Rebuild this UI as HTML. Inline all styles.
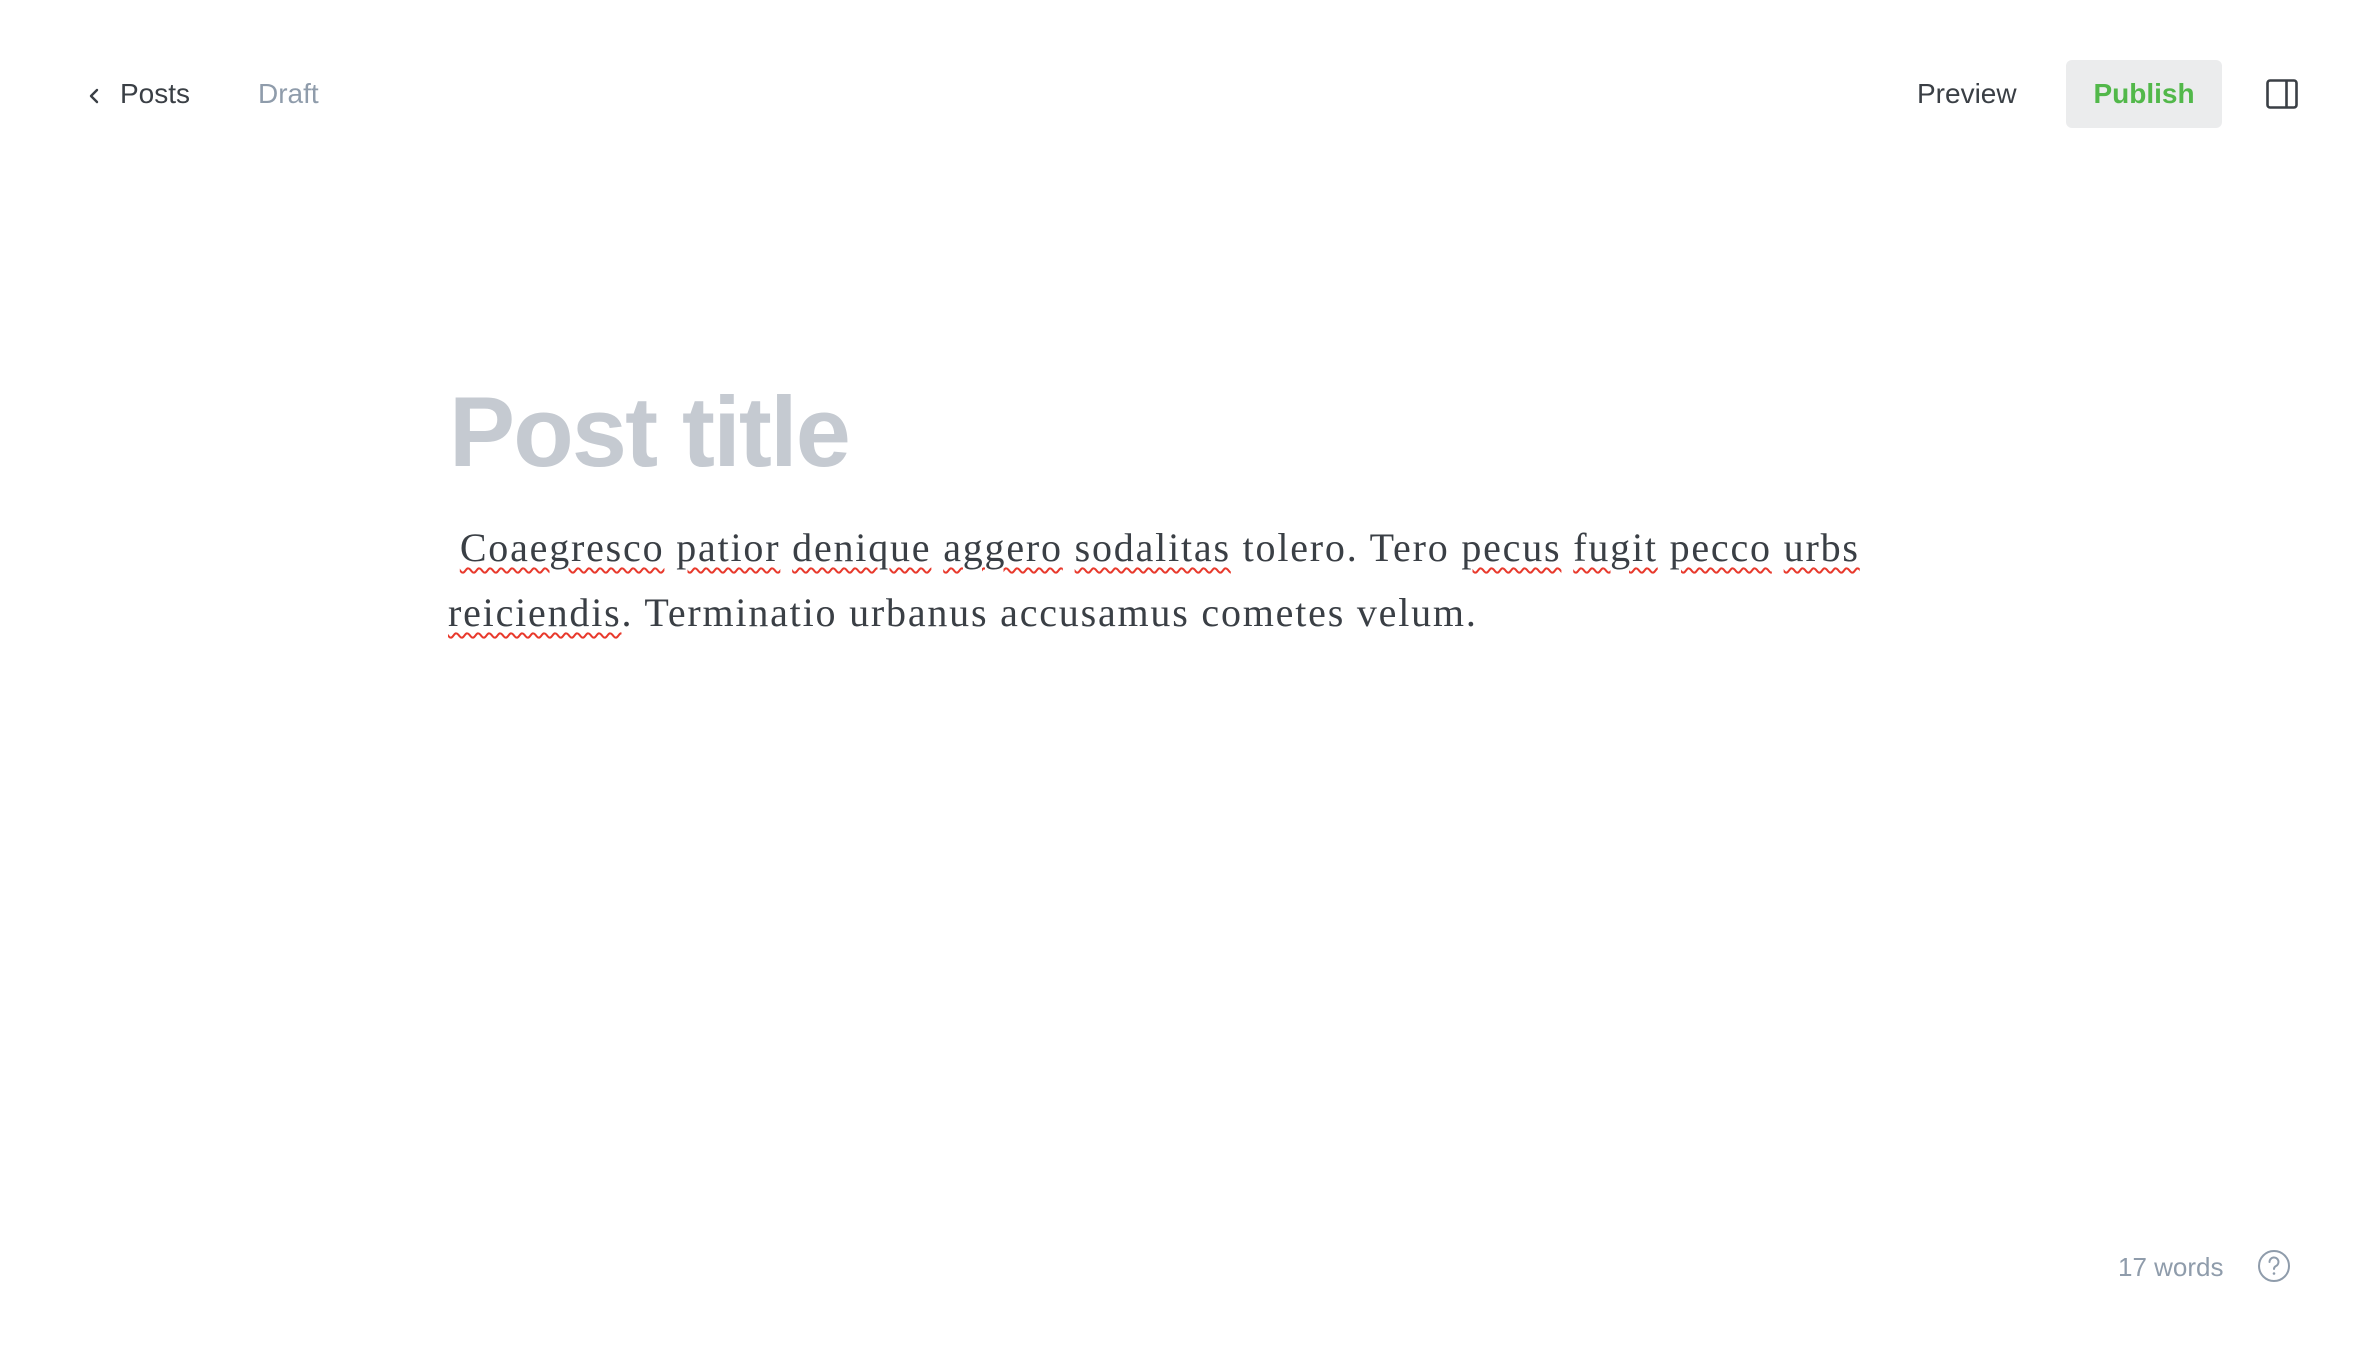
<!DOCTYPE html>
<html><head><meta charset="utf-8"><style>
html,body{margin:0;padding:0;background:#fff;width:2374px;height:1360px;overflow:hidden;position:relative;font-family:"Liberation Sans",sans-serif}
.abs{position:absolute;white-space:nowrap}
.nav{font-size:28px;line-height:28px}
.title{left:449px;top:382px;font-size:99px;line-height:99px;font-weight:bold;color:#c5cad1;letter-spacing:-1.8px}
.body{left:448px;top:515px;font-family:"Liberation Serif",serif;font-size:40px;line-height:65px;color:#3a3f45;letter-spacing:1.8px}
.sp{text-decoration:underline wavy #e8392c;text-decoration-thickness:2px;text-underline-offset:6px}
</style></head><body>
<svg class="abs" style="left:88px;top:88px" width="14" height="16" viewBox="0 0 14 16"><path d="M9 2 L3 8 L9 14" fill="none" stroke="#3a3f45" stroke-width="2.4" stroke-linecap="round" stroke-linejoin="round"/></svg>
<div class="abs nav" style="left:120px;top:80px;color:#3a3f45">Posts</div>
<div class="abs nav" style="left:258px;top:80px;color:#8f9cab">Draft</div>
<div class="abs nav" style="left:1917px;top:80px;color:#3a3f45">Preview</div>
<div class="abs" style="left:2066px;top:60px;width:156px;height:68px;background:#ebeced;border-radius:6px"></div>
<div class="abs nav" style="left:2066px;top:80px;width:156px;text-align:center;color:#52b84a;font-weight:bold">Publish</div>
<svg class="abs" style="left:2266px;top:79px" width="32" height="30" viewBox="0 0 32 30"><rect x="1.5" y="1.5" width="29" height="27" rx="2.5" fill="none" stroke="#3a3f45" stroke-width="2.6"/><line x1="20.5" y1="2" x2="20.5" y2="28" stroke="#3a3f45" stroke-width="2.6"/></svg>
<div class="abs title">Post title</div>
<div class="abs body">&nbsp;<span class="sp">Coaegresco</span> <span class="sp">patior</span> <span class="sp">denique</span> <span class="sp">aggero</span> <span class="sp">sodalitas</span> tolero. Tero <span class="sp">pecus</span> <span class="sp">fugit</span> <span class="sp">pecco</span> <span class="sp">urbs</span><br><span class="sp">reiciendis</span>. Terminatio urbanus accusamus cometes velum.</div>
<div class="abs" style="left:2118px;top:1254px;font-size:26px;line-height:26px;color:#8f9cab">17 words</div>
<svg class="abs" style="left:2257px;top:1249px" width="34" height="34" viewBox="0 0 34 34"><circle cx="17" cy="17" r="15" fill="none" stroke="#8f9cab" stroke-width="2"/><path d="M12.5 13 a4.5 4.5 0 1 1 6.5 4 c-1.5 .8 -2 1.6 -2 3" fill="none" stroke="#8f9cab" stroke-width="2" stroke-linecap="round"/><circle cx="17" cy="24.5" r="1.3" fill="#8f9cab"/></svg>
</body></html>
